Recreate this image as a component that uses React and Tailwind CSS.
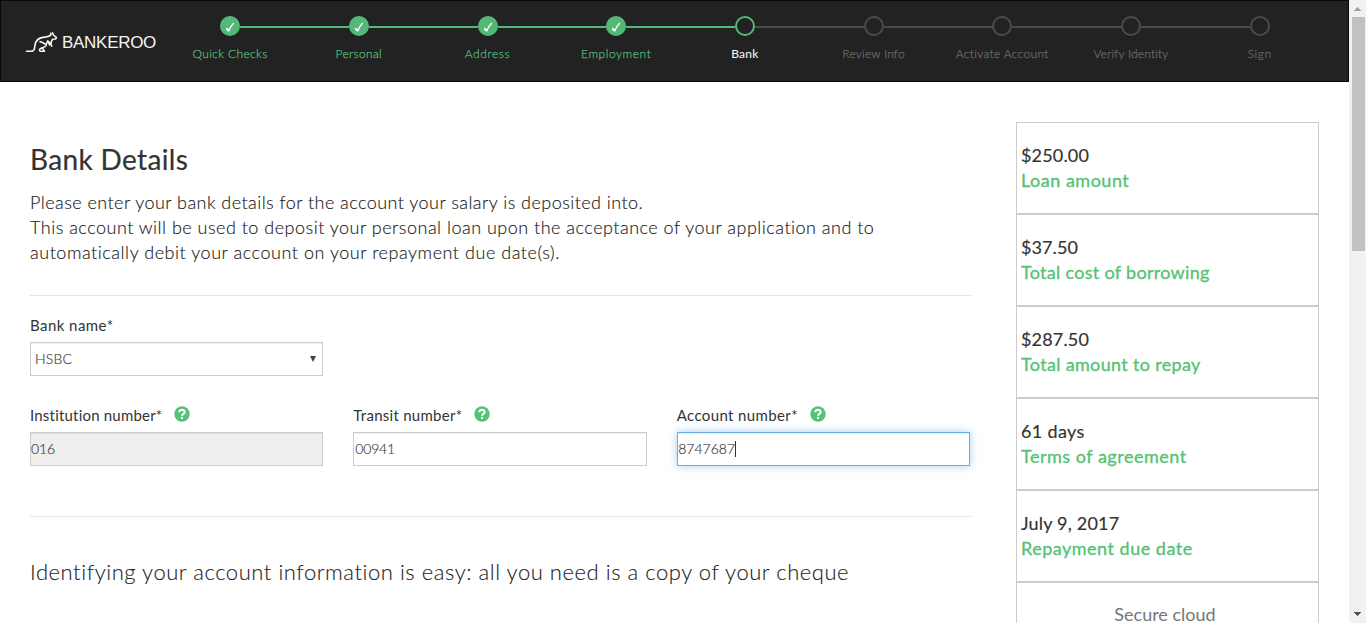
const steps = [
  { label: "Quick Checks", state: "done", spacing: "tracking-[0.36px]" },
  { label: "Personal", state: "done", spacing: "tracking-[0.33px]" },
  { label: "Address", state: "done", spacing: "tracking-[0.6px]" },
  { label: "Employment", state: "done", spacing: "tracking-[0.54px]" },
  { label: "Bank", state: "active", spacing: "tracking-[0.27px]" },
  { label: "Review Info", state: "todo", spacing: "tracking-[0.2px]" },
  { label: "Activate Account", state: "todo", spacing: "tracking-[0.32px]" },
  { label: "Verify Identity", state: "todo", spacing: "tracking-[0.17px]" },
  { label: "Sign", state: "todo", spacing: "tracking-[0.57px]" },
];

const summary = [
  { value: "$250.00", label: "Loan amount", vs: "tracking-[0.16px]", ls: "tracking-[0.5px]" },
  { value: "$37.50", label: "Total cost of borrowing", vs: "tracking-[0.09px]", ls: "tracking-[0.3px]" },
  { value: "$287.50", label: "Total amount to repay", vs: "tracking-[0.16px]", ls: "tracking-[0.33px]" },
  { value: "61 days", label: "Terms of agreement", vs: "tracking-[0.36px]", ls: "tracking-[0.51px]" },
  { value: "July 9, 2017", label: "Repayment due date", vs: "tracking-[0.2px]", ls: "tracking-[0.5px]" },
];

function Logo() {
  return (
    <div className="flex h-full w-[164.8px] shrink-0 items-center pt-[3px] pl-[24px] text-[#f5f5f5]">
      <svg width="34" height="24" viewBox="0 0 34 24" fill="none" stroke="currentColor" strokeWidth="1.6" strokeLinecap="round" strokeLinejoin="round">
        <path d="M1.5 20.3H6C9.5 20.3 9.5 17.5 10 14.2C10.7 9.5 13.5 7.2 17.5 6.4C21 5.8 24 6.3 26 3.8L25.7 2.3" />
        <path d="M27.5 1.8L28.5 4L31.5 6.6L30.5 8L27.5 8.3L25.8 12.2L24.2 11.2" />
        <path d="M25.7 12.3L26.7 15.2M23 10.5L24.6 13.8" />
        <path d="M15 10.7C18 10.7 18 13.2 21.3 13.2C22 15.8 18 16.4 15.3 17.7C14.2 18.4 14.3 20.3 15.5 20.3H19.5L17.8 17.5M22.8 9.8L21.3 13.2" />
      </svg>
      <span className="ml-[3px] font-['Liberation_Sans',sans-serif] text-[17px] leading-none tracking-[-0.29px]">BANKEROO</span>
    </div>
  );
}

function Step({ step, last }) {
  const done = step.state === "done";
  const circle = done
    ? "border-[#54b978] bg-[#54b978]"
    : step.state === "active"
      ? "border-[#54b978] bg-[#222]"
      : "border-[#4b4b4b] bg-[#222]";
  const text = done
    ? "text-[#54b978] font-light [-webkit-text-stroke:0.25px_#54b978]"
    : step.state === "active"
      ? "text-white"
      : "text-[#6a6a6a] font-light [-webkit-text-stroke:0.25px_#6a6a6a]";
  return (
    <li className="relative flex w-[128.7px] flex-col items-center pt-[15px]">
      {!last && (
        <span className={`absolute top-[25px] left-[74.5px] h-[2px] w-[109px] ${done ? "bg-[#54b978]" : "bg-[#4b4b4b]"}`} />
      )}
      <span className={`flex size-5 items-center justify-center rounded-full border-2 ${circle}`}>
        {done && (
          <svg className="mt-px" width="12" height="12" viewBox="0 0 12 12" fill="none" stroke="#fff">
            <path d="M2.4 7.1L4.8 10.1" strokeWidth="2" />
            <path d="M4.6 10.3C5.8 7 7.4 4.2 9.8 2" strokeWidth="1.3" />
          </svg>
        )}
      </span>
      <span className={`mt-[10px] text-[12px] leading-4 whitespace-nowrap ${text} ${step.spacing}`}>{step.label}</span>
    </li>
  );
}

function Help() {
  return (
    <svg className="ml-3 -mt-[2px]" width="16" height="16" viewBox="0 0 16 16">
      <circle cx="8" cy="8" r="7.7" fill="#54c174" />
      <path d="M5.2 6.2C5.2 3.1 10.8 3.1 10.7 6.2C10.7 8 8 7.7 8 9.8" fill="none" stroke="#fff" strokeWidth="2.1" />
      <rect x="6.9" y="10.9" width="2.2" height="2.1" fill="#fff" />
    </svg>
  );
}

function Field({ label, labelSpacing, value, valueSpacing, help, box, children }) {
  return (
    <div>
      <div className="flex h-8 items-center pb-[2px] text-[15px] font-normal text-[#333]">
        <span className={`whitespace-nowrap ${labelSpacing}`}>{label}</span>
        {help && <Help />}
      </div>
      <div className={`flex h-[34px] items-center border text-[14px] font-light text-[#444] ${box}`}>
        <span className={`-mt-[2px] [-webkit-text-stroke:0.2px_#444] ${valueSpacing}`}>{value}</span>
        {children}
      </div>
    </div>
  );
}

function Scrollbar() {
  return (
    <div className="flex h-full w-[17px] shrink-0 flex-col items-center justify-between bg-[#f1f1f1]">
      <div className="flex w-full flex-col items-center">
        <svg width="17" height="17" viewBox="0 0 17 17" shapeRendering="crispEdges"><path d="M5 11L8.5 7L12 11Z" fill="#a3a3a3" /></svg>
        <div className="ml-[1px] h-[234px] w-[13px] bg-[#c1c1c1]" />
      </div>
      <svg width="17" height="17" viewBox="0 0 17 17" shapeRendering="crispEdges"><path d="M5 6L8.5 10L12 6Z" fill="#505050" /></svg>
    </div>
  );
}

export default function App() {
  return (
    <div className="flex h-[623px] w-[1366px] overflow-hidden bg-white font-['Lato',sans-serif] text-[#333]">
      <div className="h-full w-[1349px] overflow-hidden">
        <header className="flex h-[82px] border border-[#080808] bg-[#222]">
          <Logo />
          <ol className="flex">
            {steps.map((s, i) => (
              <Step key={s.label} step={s} last={i === steps.length - 1} />
            ))}
          </ol>
        </header>
        <div className="flex pl-[30px]">
          <main className="w-[941px] shrink-0 pt-[59px]">
            <h1 className="text-[28px] leading-[36px] tracking-[0.36px] [-webkit-text-stroke:0.2px_#333]">Bank Details</h1>
            <div className="mt-[13px] text-[18px] leading-[25px] font-light whitespace-nowrap text-[#222] [-webkit-text-stroke:0.15px_#222]">
              <p className="tracking-[0.446px]">Please enter your bank details for the account your salary is deposited into.</p>
              <p className="tracking-[0.49px]">This account will be used to deposit your personal loan upon the acceptance of your application and to</p>
              <p className="tracking-[0.535px]">automatically debit your account on your repayment due date(s).</p>
            </div>
            <hr className="mt-[30px] border-[#e5e5e5]" />
            <div className="mt-[14px] w-[293px]">
              <Field label="Bank name*" labelSpacing="tracking-[0.45px]" value="HSBC" valueSpacing="tracking-[0.16px]" box="justify-between border-[#ccc] pr-[5px] pl-[4px] shadow-[inset_0_1px_1px_rgba(0,0,0,0.075)]">
                <svg width="8" height="8" viewBox="0 0 8 8"><path d="M1 1H7L4 7Z" fill="#444" /></svg>
              </Field>
            </div>
            <div className="mt-6 grid w-[940px] grid-cols-3 gap-[30px]">
              <Field label="Institution number*" labelSpacing="tracking-[0.2px]" value="016" valueSpacing="tracking-[-0.12px]" help box="border-[#ccc] bg-[#eee] shadow-[inset_0_1px_1px_rgba(0,0,0,0.075)]" />
              <Field label="Transit number*" labelSpacing="tracking-[0.27px]" value="00941" valueSpacing="tracking-[-0.2px]" help box="border-[#ccc] pl-px shadow-[inset_0_1px_1px_rgba(0,0,0,0.075)]" />
              <Field label="Account number*" labelSpacing="tracking-[0.38px]" value="8747687" valueSpacing="tracking-[0.02px]" help box="border-[#66afe9] pl-[0.5px] shadow-[inset_0_1px_1px_rgba(0,0,0,0.075),0_0_8px_rgba(102,175,233,0.6)]">
                <span className="h-4 w-px bg-[#333]" />
              </Field>
            </div>
            <hr className="mt-[50px] border-[#e5e5e5]" />
            <p className="mt-[39px] text-[22px] leading-8 font-light tracking-[0.545px] whitespace-nowrap text-[#222] [-webkit-text-stroke:0.1px_#222]">
              Identifying your account information is easy: all you need is a copy of your cheque
            </p>
          </main>
          <aside className="mt-10 ml-[45px] w-[303px] shrink-0 text-[18px] leading-[25px]">
            {summary.map((s) => (
              <div key={s.label} className="h-[92px] border border-[#ccc] pt-[20px] pl-[4px] whitespace-nowrap">
                <p className={`[-webkit-text-stroke:0.15px_#333] ${s.vs}`}>{s.value}</p>
                <p className={`text-[#54c174] [-webkit-text-stroke:0.3px_#54c174] ${s.ls}`}>{s.label}</p>
              </div>
            ))}
            <div className="h-[92px] border border-[#ccc] pt-[19px] pr-[5px] text-center text-[#777]">Secure cloud</div>
          </aside>
        </div>
      </div>
      <Scrollbar />
    </div>
  );
}
